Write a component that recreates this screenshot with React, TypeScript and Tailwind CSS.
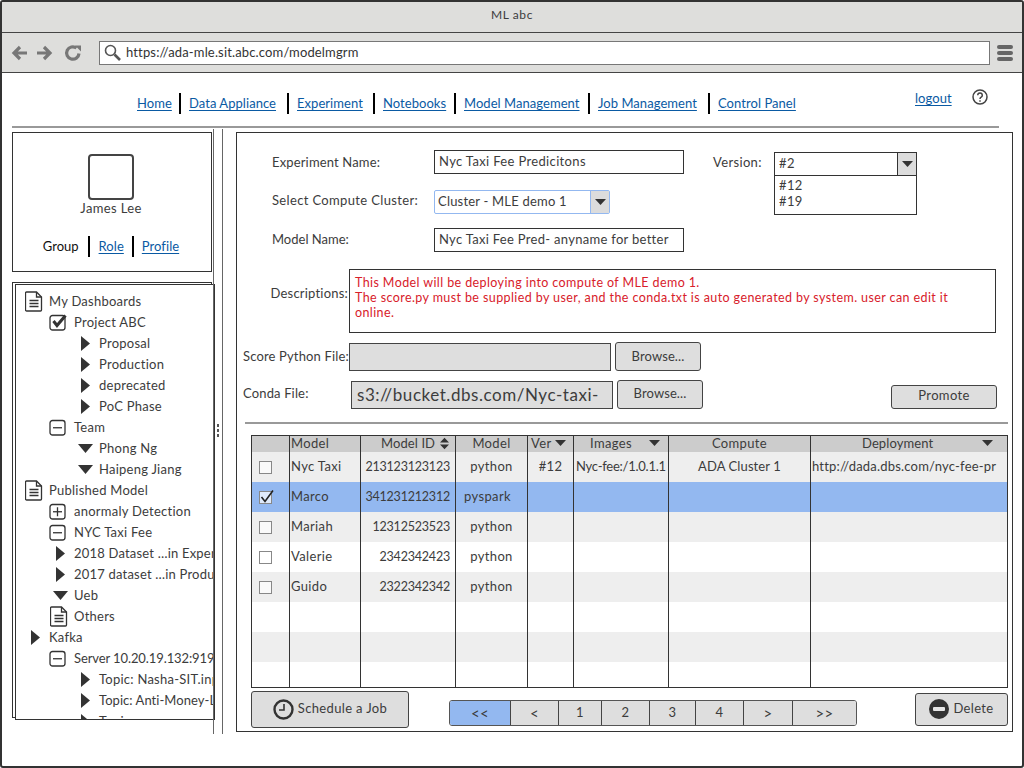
import React from "react";

const Tri = () => (
  <svg width="9" height="15" viewBox="0 0 9 15" className="ml-[7px] shrink-0"><path d="M0 0L9 7.5L0 15Z" fill="#333" /></svg>
);
const TriDown = () => (
  <svg width="15" height="9" viewBox="0 0 15 9" className="ml-[4px] shrink-0"><path d="M0 0H15L7.5 9Z" fill="#333" /></svg>
);
const Doc = () => (
  <svg width="18" height="21" viewBox="0 0 18 21" className="ml-[1px] shrink-0" fill="none" stroke="#333" strokeWidth="1.3">
    <path d="M1.5 1h10l5 5v13a1 1 0 0 1-1 1h-14a1 1 0 0 1-1-1V2a1 1 0 0 1 1-1z" />
    <path d="M11.5 1v5h5" />
    <path d="M4.5 9.5h9M4.5 12.5h9M4.5 15.5h9" />
  </svg>
);
const BoxIcon = ({ kind }: { kind: "check" | "minus" | "plus" }) => (
  <svg width="18" height="17" viewBox="0 0 18 17" className="shrink-0" fill="none" stroke="#333" strokeWidth="1.3">
    <rect x="1" y="1.5" width="15" height="14.5" rx="2.5" />
    {kind !== "check" && <path d="M4 8.75h9" />}
    {kind === "plus" && <path d="M8.5 4.25v9" />}
    {kind === "check" && <path d="M4.5 7l3.5 4.5L16.5 1.5" strokeWidth="3" />}
  </svg>
);
const Arrow = ({ flip }: { flip?: boolean }) => (
  <svg width="17" height="16" viewBox="0 0 17 16" className={flip ? "rotate-180" : ""} fill="none" stroke="#777" strokeWidth="3.2">
    <path d="M16 8H3M9 2L3 8l6 6" />
  </svg>
);

type TreeRow = { t: string; lvl: number; icon: React.ReactNode; cls?: string };
const tree: TreeRow[] = [
  { t: "My Dashboards", lvl: 0, icon: <Doc /> },
  { t: "Project ABC", lvl: 1, icon: <BoxIcon kind="check" /> },
  { t: "Proposal", lvl: 2, icon: <Tri /> },
  { t: "Production", lvl: 2, icon: <Tri /> },
  { t: "deprecated", lvl: 2, icon: <Tri /> },
  { t: "PoC Phase", lvl: 2, icon: <Tri /> },
  { t: "Team", lvl: 1, icon: <BoxIcon kind="minus" /> },
  { t: "Phong Ng", lvl: 2, icon: <TriDown /> },
  { t: "Haipeng Jiang", lvl: 2, icon: <TriDown /> },
  { t: "Published Model", lvl: 0, icon: <Doc /> },
  { t: "anormaly Detection", lvl: 1, icon: <BoxIcon kind="plus" /> },
  { t: "NYC Taxi Fee", lvl: 1, icon: <BoxIcon kind="minus" /> },
  { t: "2018 Dataset …in Experiment", lvl: 1, icon: <Tri />, cls: "tracking-[0.2px]" },
  { t: "2017 dataset …in Production", lvl: 1, icon: <Tri />, cls: "tracking-[0.2px]" },
  { t: "Ueb", lvl: 1, icon: <TriDown /> },
  { t: "Others", lvl: 1, icon: <Doc /> },
  { t: "Kafka", lvl: 0, icon: <Tri /> },
  { t: "Server 10.20.19.132:9192", lvl: 1, icon: <BoxIcon kind="minus" />, cls: "tracking-[-0.1px]" },
  { t: "Topic: Nasha-SIT.input", lvl: 2, icon: <Tri /> },
  { t: "Topic: Anti-Money-Laundering", lvl: 2, icon: <Tri />, cls: "tracking-[0.05px]" },
  { t: "Topic:", lvl: 2, icon: <Tri /> },
];
const lvlClass = ["pl-[8px]", "pl-[33px]", "pl-[58px]"];

const nav = [
  { t: "Home", w: "w-[33px]" },
  { t: "Data Appliance", w: "w-[89px]" },
  { t: "Experiment", w: "w-[67px]" },
  { t: "Notebooks", w: "w-[62px]" },
  { t: "Model Management", w: "w-[115px]" },
  { t: "Job Management", w: "w-[101px]" },
  { t: "Control Panel", w: "w-[78px]" },
];

const Sep = ({ cls }: { cls: string }) => <span className={`w-[2px] bg-black shrink-0 ${cls}`} />;
const Link = ({ children, cls = "" }: { children: React.ReactNode; cls?: string }) => (
  <a className={`text-[#0a5aa3] underline underline-offset-2 whitespace-nowrap tracking-[0.05px] ${cls}`}>{children}</a>
);
const Caret = () => (
  <svg width="11" height="6" viewBox="0 0 11 6" className="shrink-0"><path d="M0 0H11L5.5 6Z" fill="#333" /></svg>
);
const Check = ({ on }: { on?: boolean }) => (
  <span className="relative ml-[7px] block w-[13px] h-[13px] border border-[#888] bg-white/70">
    {on && (
      <svg width="15" height="15" viewBox="0 0 15 15" className="absolute left-0 -top-[3px]" fill="none" stroke="#222" strokeWidth="1.6"><path d="M1.5 8l3.5 4.5L13 1.5" /></svg>
    )}
  </span>
);

const rows: { bg: string; cells?: string[]; on?: boolean; h?: string }[] = [
  { bg: "bg-[#eeeeee]", cells: ["Nyc Taxi", "213123123123", "python", "#12", "Nyc-fee:/1.0.1.1", "ADA Cluster 1", "http://dada.dbs.com/nyc-fee-pr"] },
  { bg: "bg-[#93b8f0]", cells: ["Marco", "341231212312", "pyspark", "", "", "", ""], on: true },
  { bg: "bg-[#eeeeee]", cells: ["Mariah", "12312523523", "python", "", "", "", ""] },
  { bg: "bg-white", cells: ["Valerie", "2342342423", "python", "", "", "", ""] },
  { bg: "bg-[#eeeeee]", cells: ["Guido", "2322342342", "python", "", "", "", ""] },
  { bg: "bg-white" },
  { bg: "bg-[#eeeeee]" },
  { bg: "bg-white", h: "h-[25px]" },
];

const pages = [
  { t: "<<", w: "w-[60px]", blue: true },
  { t: "<", w: "w-[48px]" },
  { t: "1", w: "w-[43px]" },
  { t: "2", w: "w-[48px]" },
  { t: "3", w: "w-[46px]" },
  { t: "4", w: "w-[48px]" },
  { t: ">", w: "w-[49px]" },
  { t: ">>", w: "w-[64px]" },
];

const cellAlign = [
  "text-left pl-[1px]",
  "text-right pr-[5px] text-[12.5px] tracking-[-0.2px]",
  "text-center",
  "text-center",
  "text-left pl-[2px] tracking-[-0.25px]",
  "text-center tracking-[0.1px]",
  "text-left pl-[1px] tracking-[0.2px]",
];

export default function App() {
  return (
    <div className="w-[1024px] h-[768px] box-border border-2 border-[#333] rounded-[3px] bg-white overflow-hidden flex flex-col text-[13px] tracking-[0.35px] text-[#3c3c3c] [font-family:Lato,sans-serif]">
      {/* title */}
      <div className="h-[30px] shrink-0 bg-[#dededc] flex items-center justify-center pb-[5px] text-[12px] tracking-[0.6px]">ML abc</div>
      <div className="h-[41px] shrink-0 bg-[#dededc] border-y border-[#444] flex items-center pl-[9px]">
        <Arrow />
        <span className="w-[8px]" />
        <Arrow flip />
        <svg width="18" height="18" viewBox="0 0 18 18" className="ml-[11px]" fill="none" stroke="#777" strokeWidth="3.2">
          <path d="M15 9.5A6.2 6.2 0 1 1 12.5 4" />
          <path d="M11 1.5h6v6z" fill="#777" stroke="none" />
        </svg>
        <div className="ml-[17px] w-[891px] h-[24px] bg-white border border-[#777] flex items-center pl-[4px]">
          <svg width="17" height="17" viewBox="0 0 17 17" fill="none" stroke="#555" strokeWidth="1.6"><circle cx="6.5" cy="6.5" r="5" /><path d="M10.5 10.5L16 16" strokeWidth="2.6" /></svg>
          <span className="ml-[5px] text-[#333] tracking-[0.15px]">https://ada-mle.sit.abc.com/modelmgrm</span>
        </div>
        <div className="ml-[7px] w-[16px] flex flex-col gap-[2px]">
          <span className="h-[4px] rounded bg-[#666]" />
          <span className="h-[4px] rounded bg-[#666]" />
          <span className="h-[4px] rounded bg-[#666]" />
        </div>
      </div>

      {/* nav */}
      <div className="h-[53px] shrink-0 flex items-start pl-[135px] pt-[20px]">
        {nav.map((n, i) => (
          <React.Fragment key={n.t}>
            <span className={`${n.w} block pt-[1px] shrink-0`}><Link>{n.t}</Link></span>
            {i < nav.length - 1 && <Sep cls="h-[21px] mx-[8.5px]" />}
          </React.Fragment>
        ))}
        <span className="ml-[119px] w-[36px] -mt-[4px] block"><Link>logout</Link></span>
        <svg width="16" height="16" viewBox="0 0 16 16" className="ml-[21px] -mt-[4px]" fill="none" stroke="#444" strokeWidth="1.5">
          <circle cx="8" cy="8" r="7" />
          <path d="M5.7 6.2a2.3 2.3 0 1 1 3.5 2c-.8.5-1.2.9-1.2 1.8" />
          <path d="M8 11.2v1.6" />
        </svg>
      </div>
      <div className="ml-[10px] w-[987px] h-[2px] shrink-0 bg-[#999]" />

      {/* body */}
      <div className="flex pl-[10px] items-start flex-1 min-h-0">
        <div className="w-[201px] shrink-0 pt-[4px]">
          <div className="w-[200px] h-[140px] border border-[#333] flex flex-col items-center pt-[21px] pr-[2px]">
            <div className="w-[46px] h-[46px] border-2 border-[#444] rounded-[4px] bg-white" />
            <div className="-mt-[1px] leading-[18px]">James Lee</div>
            <div className="mt-[19px] flex items-center">
              <span className="text-[#111] tracking-[0px]">Group</span>
              <Sep cls="h-[21px] mx-[9px] w-[1.5px]" />
              <Link>Role</Link>
              <Sep cls="h-[21px] mx-[8px] w-[1.5px]" />
              <Link>Profile</Link>
            </div>
          </div>
          <div className="relative mt-[10px] h-[438px]">
            <div className="absolute left-0 top-0 w-[200px] h-[436px] border border-[#333]" />
            <div className="absolute left-[3px] top-[2px] w-[200px] h-[436px] border border-[#333] bg-white overflow-hidden pt-[6px] tracking-[0.25px]">
              {tree.map((r) => (
                <div key={r.t} className={`h-[21px] flex items-center whitespace-nowrap ${lvlClass[r.lvl]}`}>
                  <span className="w-[25px] shrink-0 flex items-center">{r.icon}</span>
                  <span className={r.cls ?? ""}>{r.t}</span>
                </div>
              ))}
            </div>
          </div>
        </div>

        {/* splitter */}
        <div className="relative w-[10px] h-[605px] shrink-0 mt-[1px] border-x border-[#666]">
          <div className="absolute left-[3px] top-[295px] flex flex-col gap-[2px]">
            <span className="w-[2px] h-[3px] bg-[#555]" />
            <span className="w-[2px] h-[3px] bg-[#555]" />
            <span className="w-[2px] h-[3px] bg-[#555]" />
          </div>
        </div>

        {/* main */}
        <div className="ml-[13px] mt-[4px] w-[777px] h-[600px] shrink-0 border border-[#333] flex flex-col">
          <div className="flex pl-[35px] pt-[17px]">
            <div className="flex flex-col">
              <div className="flex items-center h-[24px]">
                <span className="w-[162px] pt-[1px] tracking-[0.15px]">Experiment Name:</span>
                <div className="w-[250px] h-[24px] border border-[#333] flex items-center pl-[4px]">Nyc Taxi Fee Predicitons</div>
              </div>
              <div className="flex items-center h-[24px] mt-[16px]">
                <span className="w-[162px] -mt-[3px]">Select Compute Cluster:</span>
                <div className="w-[176px] h-[24px] border border-[#93b8f0] rounded-[2px] flex items-center pl-[3px] tracking-[0.2px]">
                  <span className="flex-1">Cluster - MLE demo 1</span>
                  <span className="w-[19px] h-full bg-[#dcdcdc] border-l border-[#93b8f0] flex items-center justify-center"><Caret /></span>
                </div>
              </div>
              <div className="flex items-center h-[24px] mt-[14px]">
                <span className="w-[162px] tracking-[0px]">Model Name:</span>
                <div className="w-[250px] h-[24px] border border-[#333] flex items-center pl-[4px] tracking-[0.3px]">Nyc Taxi Fee Pred- anyname for better</div>
              </div>
            </div>
            <span className="ml-[29px] w-[61px] pt-[3px] leading-[18px]">Version:</span>
            <div className="w-[143px] h-[63px] mt-[2px] border border-[#333]">
              <div className="h-[23px] border-b border-[#333] flex items-center pl-[4px]">
                <span className="flex-1">#2</span>
                <span className="w-[19px] h-full bg-[#dcdcdc] border-l border-[#333] flex items-center justify-center"><Caret /></span>
              </div>
              <div className="pl-[4px] pt-[1px] leading-[16px]">#12<br />#19</div>
            </div>
          </div>

          <div className="flex mt-[17px] h-[64px]">
            <span className="w-[112px] text-right pt-[15px] pr-[1px] tracking-[0.2px]">Descriptions:</span>
            <div className="w-[647px] border border-[#333] px-[5px] pt-[5px] text-[#d8202a] text-[12.5px] leading-[15px] tracking-[0.4px]">
              This Model will be deploying into compute of MLE demo 1.<br />
              The score.py must be supplied by user, and the conda.txt is auto generated by system. user can edit it<br />
              online.
            </div>
          </div>

          <div className="flex items-center h-[29px] mt-[9px] pl-[6px]">
            <span className="w-[106px] whitespace-nowrap tracking-[0.15px]">Score Python File:</span>
            <div className="w-[262px] h-[28px] mt-[1px] bg-[#dedede] border border-[#444]" />
            <button className="ml-[4px] w-[86px] h-[29px] bg-[#dedede] border border-[#444] rounded-[3px] tracking-[0.1px]">Browse...</button>
          </div>

          <div className="flex items-center h-[29px] mt-[9px] pl-[6px]">
            <span className="w-[108px] -mt-[2px] tracking-[0.15px]">Conda File:</span>
            <div className="w-[262px] h-[28px] mt-[1px] bg-[#dedede] border border-[#444] flex items-center pl-[5px] text-[17px] tracking-[0.55px] whitespace-nowrap overflow-hidden">s3://bucket.dbs.com/Nyc-taxi-</div>
            <button className="ml-[4px] w-[86px] h-[29px] bg-[#dedede] border border-[#444] rounded-[3px] tracking-[0.1px] pb-[2px]">Browse...</button>
            <button className="ml-[188px] mt-[4px] w-[106px] h-[24px] bg-[#dedede] border border-[#444] rounded-[3px] pb-[1px]">Promote</button>
          </div>

          <div className="ml-[8px] mt-[13px] w-[763px] h-[2px] shrink-0 bg-[#999]" />

          <div className="ml-[14px] mt-[11px] w-[757px] h-[253px] border border-[#333] overflow-hidden shrink-0">
            <table className="w-[755px] table-fixed border-separate border-spacing-0">
              <colgroup>
                <col className="w-[37px]" />
                <col className="w-[71px]" />
                <col className="w-[95px]" />
                <col className="w-[72px]" />
                <col className="w-[46px]" />
                <col className="w-[95px]" />
                <col className="w-[142px]" />
                <col className="w-[197px]" />
              </colgroup>
              <thead>
                <tr className="h-[16px] bg-[#cccccc]">
                  <th className="font-normal" />
                  <th className="font-normal border-l border-[#333] text-left pl-[1px] p-0 leading-[14px] pb-[2px]">Model</th>
                  <th className="font-normal border-l border-[#333] p-0 leading-[14px] pb-[2px]">
                    <span className="flex items-center pl-[20px] gap-[5px] tracking-[0.1px]">Model ID
                      <svg width="9" height="13" viewBox="0 0 10 13"><path d="M0 5.5L5 0l5 5.5zM0 7.5L5 13l5-5.5z" fill="#333" /></svg>
                    </span>
                  </th>
                  <th className="font-normal border-l border-[#333] p-0 leading-[14px] pb-[2px]">Model</th>
                  <th className="font-normal border-l border-[#333] p-0 leading-[14px] pb-[2px]">
                    <span className="flex items-center justify-between pl-[3px] pr-[7px]">Ver <Caret /></span>
                  </th>
                  <th className="font-normal border-l border-[#333] p-0 leading-[14px] pb-[2px]">
                    <span className="flex items-center justify-between pl-[16px] pr-[8px]">Images <Caret /></span>
                  </th>
                  <th className="font-normal border-l border-[#333] p-0 leading-[14px] pb-[2px]">Compute</th>
                  <th className="font-normal border-l border-[#333] p-0 leading-[14px] pb-[2px]">
                    <span className="flex items-center justify-between pl-[51px] pr-[14px] tracking-[0.1px]">Deployment <Caret /></span>
                  </th>
                </tr>
              </thead>
              <tbody>
                {rows.map((r, i) => (
                  <tr key={i} className={`${r.h ?? "h-[30px]"} ${r.bg}`}>
                    <td className="p-0">{r.cells && <Check on={r.on} />}</td>
                    {Array.from({ length: 7 }).map((_, c) => (
                      <td key={c} className={`border-l border-[#333] p-0 whitespace-nowrap overflow-hidden ${cellAlign[c]}`}>
                        {r.cells ? (r.on && c === 2 ? <span className="mr-[8px]">{r.cells[c]}</span> : r.cells[c]) : ""}
                      </td>
                    ))}
                  </tr>
                ))}
              </tbody>
            </table>
          </div>

          <div className="flex items-start ml-[14px] mt-[3px]">
            <button className="w-[158px] h-[37px] bg-[#dedede] border border-[#444] rounded-[3px] flex items-center justify-center gap-[4px] pb-[1px]">
              <svg width="21" height="21" viewBox="0 0 21 21" fill="none" stroke="#333" strokeWidth="2.4">
                <circle cx="10.5" cy="10.5" r="9" />
                <path d="M11 5v6H6" strokeWidth="1.6" />
              </svg>
              Schedule a Job
            </button>
            <div className="ml-[40px] mt-[9px] flex h-[26px] border border-[#555] rounded-[3px] overflow-hidden">
              {pages.map((p, i) => (
                <span key={p.t} className={`${p.w} flex items-center justify-center ${i > 0 ? "border-l border-[#444]" : ""} ${i < 2 || i > 5 ? "text-[15px]" : ""} ${p.blue ? "bg-[#93b8f0]" : "bg-[#dedede]"}`}>{p.t}</span>
              ))}
            </div>
            <button className="ml-[58px] mt-[2px] w-[93px] h-[33px] bg-[#dedede] border border-[#444] rounded-[3px] flex items-center justify-center gap-[4px] pb-[1px]">
              <svg width="20" height="20" viewBox="0 0 20 20"><circle cx="10" cy="10" r="10" fill="#333" /><rect x="4" y="8" width="12" height="4" rx="1" fill="#e6e6e6" /></svg>
              Delete
            </button>
          </div>
        </div>
      </div>
    </div>
  );
}
